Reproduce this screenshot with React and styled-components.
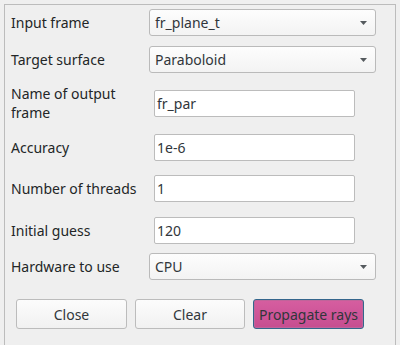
import React from "react";
import styled, { createGlobalStyle } from "styled-components";

const Global = createGlobalStyle`
  html, body {
    margin: 0;
    padding: 0;
    background: #efefef;
  }
  body {
    font-family: "Noto Sans", "DejaVu Sans", sans-serif;
    font-size: 14px;
    color: #232627;
  }
`;

const St = {
  Page: styled.div`
    width: 400px;
    height: 345px;
    overflow: hidden;
    padding: 4px 0 0 4px;
    box-sizing: border-box;
  `,
  Frame: styled.div`
    width: 392px;
    height: 360px;
    box-sizing: border-box;
    border: 1px solid #bcbcbc;
    padding: 4px 0 0 6px;
    display: flex;
    flex-direction: column;
  `,
  Row: styled.div`
    display: grid;
    grid-template-columns: 138px 1fr;
    align-items: center;
    height: ${(p) => p.$h || 27}px;
    margin-top: ${(p) => p.$mt || 0}px;
  `,
  Label: styled.div`
    line-height: 19px;
    color: #232627;
  `,
  Combo: styled.div`
    width: 227px;
    height: 27px;
    box-sizing: border-box;
    border: 1px solid #bababa;
    border-radius: 3px;
    background: linear-gradient(#fdfdfd, #f3f3f3);
    display: flex;
    align-items: center;
    justify-content: space-between;
    padding: 0 8px 0 5px;
    color: #31363b;
  `,
  Arrow: styled.svg`
    width: 7px;
    height: 4px;
  `,
  Edit: styled.div`
    margin-left: 5px;
    width: 201px;
    height: 27px;
    box-sizing: border-box;
    border: 1px solid #bcbcbc;
    border-radius: 2px;
    background: #ffffff;
    display: flex;
    align-items: center;
    padding-left: 2px;
    color: #31363b;
  `,
  Buttons: styled.div`
    display: flex;
    gap: 8px;
    margin-top: 19px;
    padding-left: 5px;
  `,
  Button: styled.button`
    width: ${(p) => p.$w || 111}px;
    height: 30px;
    box-sizing: border-box;
    font-family: inherit;
    font-size: 14px;
    color: #31363b;
    border-radius: 3px;
    border: 1px solid ${(p) => (p.$primary ? "#34668c" : "#bcbcbc")};
    background: ${(p) =>
      p.$primary
        ? "linear-gradient(#d65ea0, #c64d90)"
        : "linear-gradient(#fcfcfc, #f1f1f1)"};
    box-shadow: ${(p) =>
      p.$primary ? "inset 0 0 0 1px #c0649a" : "none"};
    padding: 0;
  `,
};

function ComboBox({ value }) {
  return (
    <St.Combo>
      <span>{value}</span>
      <St.Arrow viewBox="0 0 7 4">
        <path d="M0 0 L7 0 L3.5 4 Z" fill="#555a5e" />
      </St.Arrow>
    </St.Combo>
  );
}

export default function App() {
  return (
    <>
      <Global />
      <St.Page>
        <St.Frame>
          <St.Row>
            <St.Label>Input frame</St.Label>
            <ComboBox value="fr_plane_t" />
          </St.Row>
          <St.Row $mt={10}>
            <St.Label>Target surface</St.Label>
            <ComboBox value="Paraboloid" />
          </St.Row>
          <St.Row $mt={10} $h={40}>
            <St.Label>Name of output<br />frame</St.Label>
            <St.Edit>fr_par</St.Edit>
          </St.Row>
          <St.Row $mt={11}>
            <St.Label>Accuracy</St.Label>
            <St.Edit>1e-6</St.Edit>
          </St.Row>
          <St.Row $mt={14}>
            <St.Label>Number of threads</St.Label>
            <St.Edit>1</St.Edit>
          </St.Row>
          <St.Row $mt={15}>
            <St.Label>Initial guess</St.Label>
            <St.Edit>120</St.Edit>
          </St.Row>
          <St.Row $mt={9}>
            <St.Label>Hardware to use</St.Label>
            <ComboBox value="CPU" />
          </St.Row>
          <St.Buttons>
            <St.Button>Close</St.Button>
            <St.Button $w={110}>Clear</St.Button>
            <St.Button $primary>Propagate rays</St.Button>
          </St.Buttons>
        </St.Frame>
      </St.Page>
    </>
  );
}
